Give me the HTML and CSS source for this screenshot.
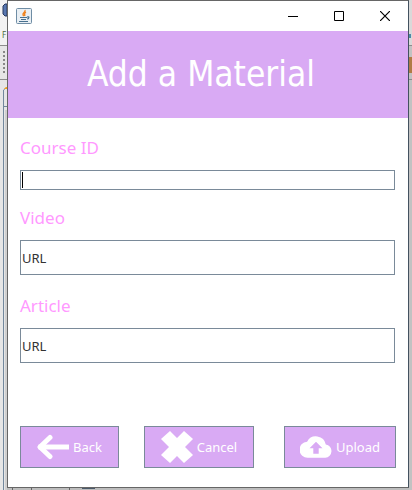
FILE: index.html
```html
<!DOCTYPE html>
<html lang="en">
<head>
<meta charset="utf-8">
<meta name="viewport" content="width=device-width, initial-scale=1">
<title>Add a Material</title>
<link rel="stylesheet" href="styles.css">
</head>
<body>
<div class="desktop">
  <svg class="strip strip-left" width="7" height="490" aria-hidden="true">
    <rect width="7" height="490" fill="#e6e6e6"/>
    <rect width="7" height="45" fill="#f2f2f2"/>
    <path d="M7 4H5L3 6v8l2 2h2z" fill="#5877b0" stroke="#27385f"/>
    <text class="menu-letter" x="2" y="38">F</text>
    <path d="M0 45.500H7M0 79.500H7" stroke="#8c8c8c"/>
    <path d="M4 51v24" stroke="#888" stroke-width="2" stroke-dasharray="2 2"/>
    <rect x="5" y="110" width="2" height="380" fill="#cfcfcf"/>
    <path d="M3.500 490V90l3-2.500M3 106.500H7" fill="none" stroke="#72889d"/>
    <path d="M4 89l2-2h1v2z" fill="#f0a020"/>
  </svg>
  <main class="window">
    <header class="titlebar">
      <svg class="java" width="16" height="16" viewBox="0 0 16 16" aria-hidden="true">
        <rect x=".5" y=".5" width="15" height="15" rx="1" fill="#e9eff4" stroke="#6f8da5"/>
        <path d="M9 2c1 2-3 3-2 5l1 1M10 4C8 5 8 6 9 8" fill="none" stroke="#ef8420" stroke-width="1.300"/>
        <path d="M4 9.500h7M5 11.500h5M3 13.500h9M11 9c3-1 2 2 0 2" fill="none" stroke="#48718f" stroke-width="1.200"/>
      </svg>
      <div class="controls">
        <button class="control" aria-label="Minimize"><svg width="10" height="10"><path d="M0 5.500h10" stroke="#000"/></svg></button>
        <button class="control" aria-label="Maximize"><svg width="10" height="10"><path d="M.5.5h9v9h-9z" fill="none" stroke="#000"/></svg></button>
        <button class="control" aria-label="Close"><svg width="10" height="10"><path d="M0 0l10 10M10 0L0 10" stroke="#000" stroke-width="1.200"/></svg></button>
      </div>
    </header>
    <h1 class="banner">Add a Material</h1>
    <form class="form">
      <label class="label" for="course">Course ID</label>
      <div class="field field-short"><input class="input" id="course" type="text"></div>
      <label class="label" for="video">Video</label>
      <div class="field"><input class="input" id="video" type="text" value="URL"></div>
      <label class="label" for="article">Article</label>
      <div class="field"><input class="input" id="article" type="text" value="URL"></div>
      <div class="actions">
        <button class="action back" type="button">
          <svg width="32" height="32" viewBox="0 0 32 32" aria-hidden="true"><path d="M4 16h25.500" stroke="#fff" stroke-width="5" stroke-linecap="square"/><path d="M13 6.500L3 16l10 9.500" fill="none" stroke="#fff" stroke-width="5" stroke-linecap="round" stroke-linejoin="round"/></svg>
          Back
        </button>
        <button class="action cancel" type="button">
          <svg width="32" height="32" viewBox="0 0 32 32" aria-hidden="true"><path d="M9 0l7 7 7-7 9 8-8 8 8 8-9 8-7-7-7 7-9-8 8-8-8-8z" fill="#fff"/></svg>
          Cancel
        </button>
        <button class="action upload" type="button">
          <svg width="32" height="32" viewBox="0 0 32 32" aria-hidden="true"><path fill-rule="evenodd" d="M25.800 13.400a10 10 0 0 0-18.700-2.700A8 8 0 0 0 8 26.700h17.300a6.700 6.700 0 0 0 .5-13.300zM18.700 17.300v5.400h-5.400v-5.400H9.500L16 10.800l6.500 6.500z" fill="#fff"/></svg>
          Upload
        </button>
      </div>
    </form>
  </main>
  <svg class="strip strip-right" width="3" height="490" aria-hidden="true">
    <rect width="3" height="490" fill="#c2c2c2"/>
    <rect width="3" height="45" fill="#d9d9d9"/>
    <path d="M0 34h2v4H0z" fill="#4c8aa8"/>
    <path d="M0 45.500h3M0 79.500h3" stroke="#8c8c8c"/>
    <path d="M0 57h3v16H0z" fill="#b07b45"/>
  </svg>
  <svg class="floor" height="2" aria-hidden="true">
    <rect width="100%" height="2" fill="#bdbdbd"/>
    <path d="M5 0h1v2H5zM24 0h1v2h-1zM62 0h1v2h-1z" fill="#666"/>
    <path d="M75 0h13v1H75z" fill="#4c5a6a"/>
  </svg>
</div>
</body>
</html>
```
FILE: styles.css
```css
* { box-sizing: border-box; }

body {
  margin: 0;
  font-family: "Noto Sans", Tahoma, sans-serif;
}

.desktop {
  position: relative;
  display: flex;
  min-height: 100vh;
  padding: 0 3px 2px 7px;
  overflow: hidden;
}

.strip {
  position: absolute;
  top: 0;
}

.strip-left { left: 0; }

.strip-right { right: 0; }

.menu-letter {
  font-size: 8px;
  fill: #4c6840;
}

.floor {
  position: absolute;
  left: 7px;
  bottom: 0;
  width: calc(100% - 10px);
}

.window {
  display: flex;
  flex: 1;
  flex-direction: column;
  background: #fff;
  border: 1px solid #666;
  border-right-color: #435260;
}

.titlebar {
  display: flex;
  justify-content: space-between;
  align-items: center;
  height: 30px;
  padding-left: 8px;
}

.controls {
  display: flex;
  height: 100%;
}

.control {
  display: grid;
  place-items: center;
  width: 46px;
  padding: 0;
  border: 0;
  background: none;
}

.banner {
  margin: 0;
  padding-right: 14px;
  background: #d9aaf4;
  color: #fff;
  font-family: "DejaVu Sans Condensed", Tahoma, sans-serif;
  font-size: 35px;
  font-weight: 400;
  line-height: 87px;
  text-align: center;
}

.form {
  display: flex;
  flex: 1;
  flex-direction: column;
  padding: 20px 12px 19px;
}

.label {
  margin-bottom: 12px;
  color: #ff99ff;
  font-size: 17px;
  line-height: 20px;
}

.field {
  height: 35px;
  margin-right: 1px;
  margin-bottom: 21px;
  border: 1px solid #7a8a99;
}

.field-short {
  height: 20px;
  margin-bottom: 18px;
  padding: 1px;
}

.input {
  display: block;
  width: 100%;
  height: 100%;
  padding: 0 1px;
  border: 0;
  outline: 0;
  background: none;
  color: #333;
  font: 13px "Noto Sans", Tahoma, sans-serif;
}

.field-short .input {
  border-left: 1px solid #000;
}

.actions {
  display: flex;
  margin-top: auto;
}

.action {
  display: flex;
  justify-content: center;
  align-items: center;
  gap: 4px;
  height: 42px;
  padding: 0;
  border: 1px solid #7a8a99;
  background: #d9aaf4;
  color: #fff;
  font: 13px "Noto Sans", Tahoma, sans-serif;
}

.back { width: 99px; }

.cancel {
  width: 110px;
  margin-left: 25px;
}

.upload {
  width: 112px;
  margin-left: auto;
}
```
